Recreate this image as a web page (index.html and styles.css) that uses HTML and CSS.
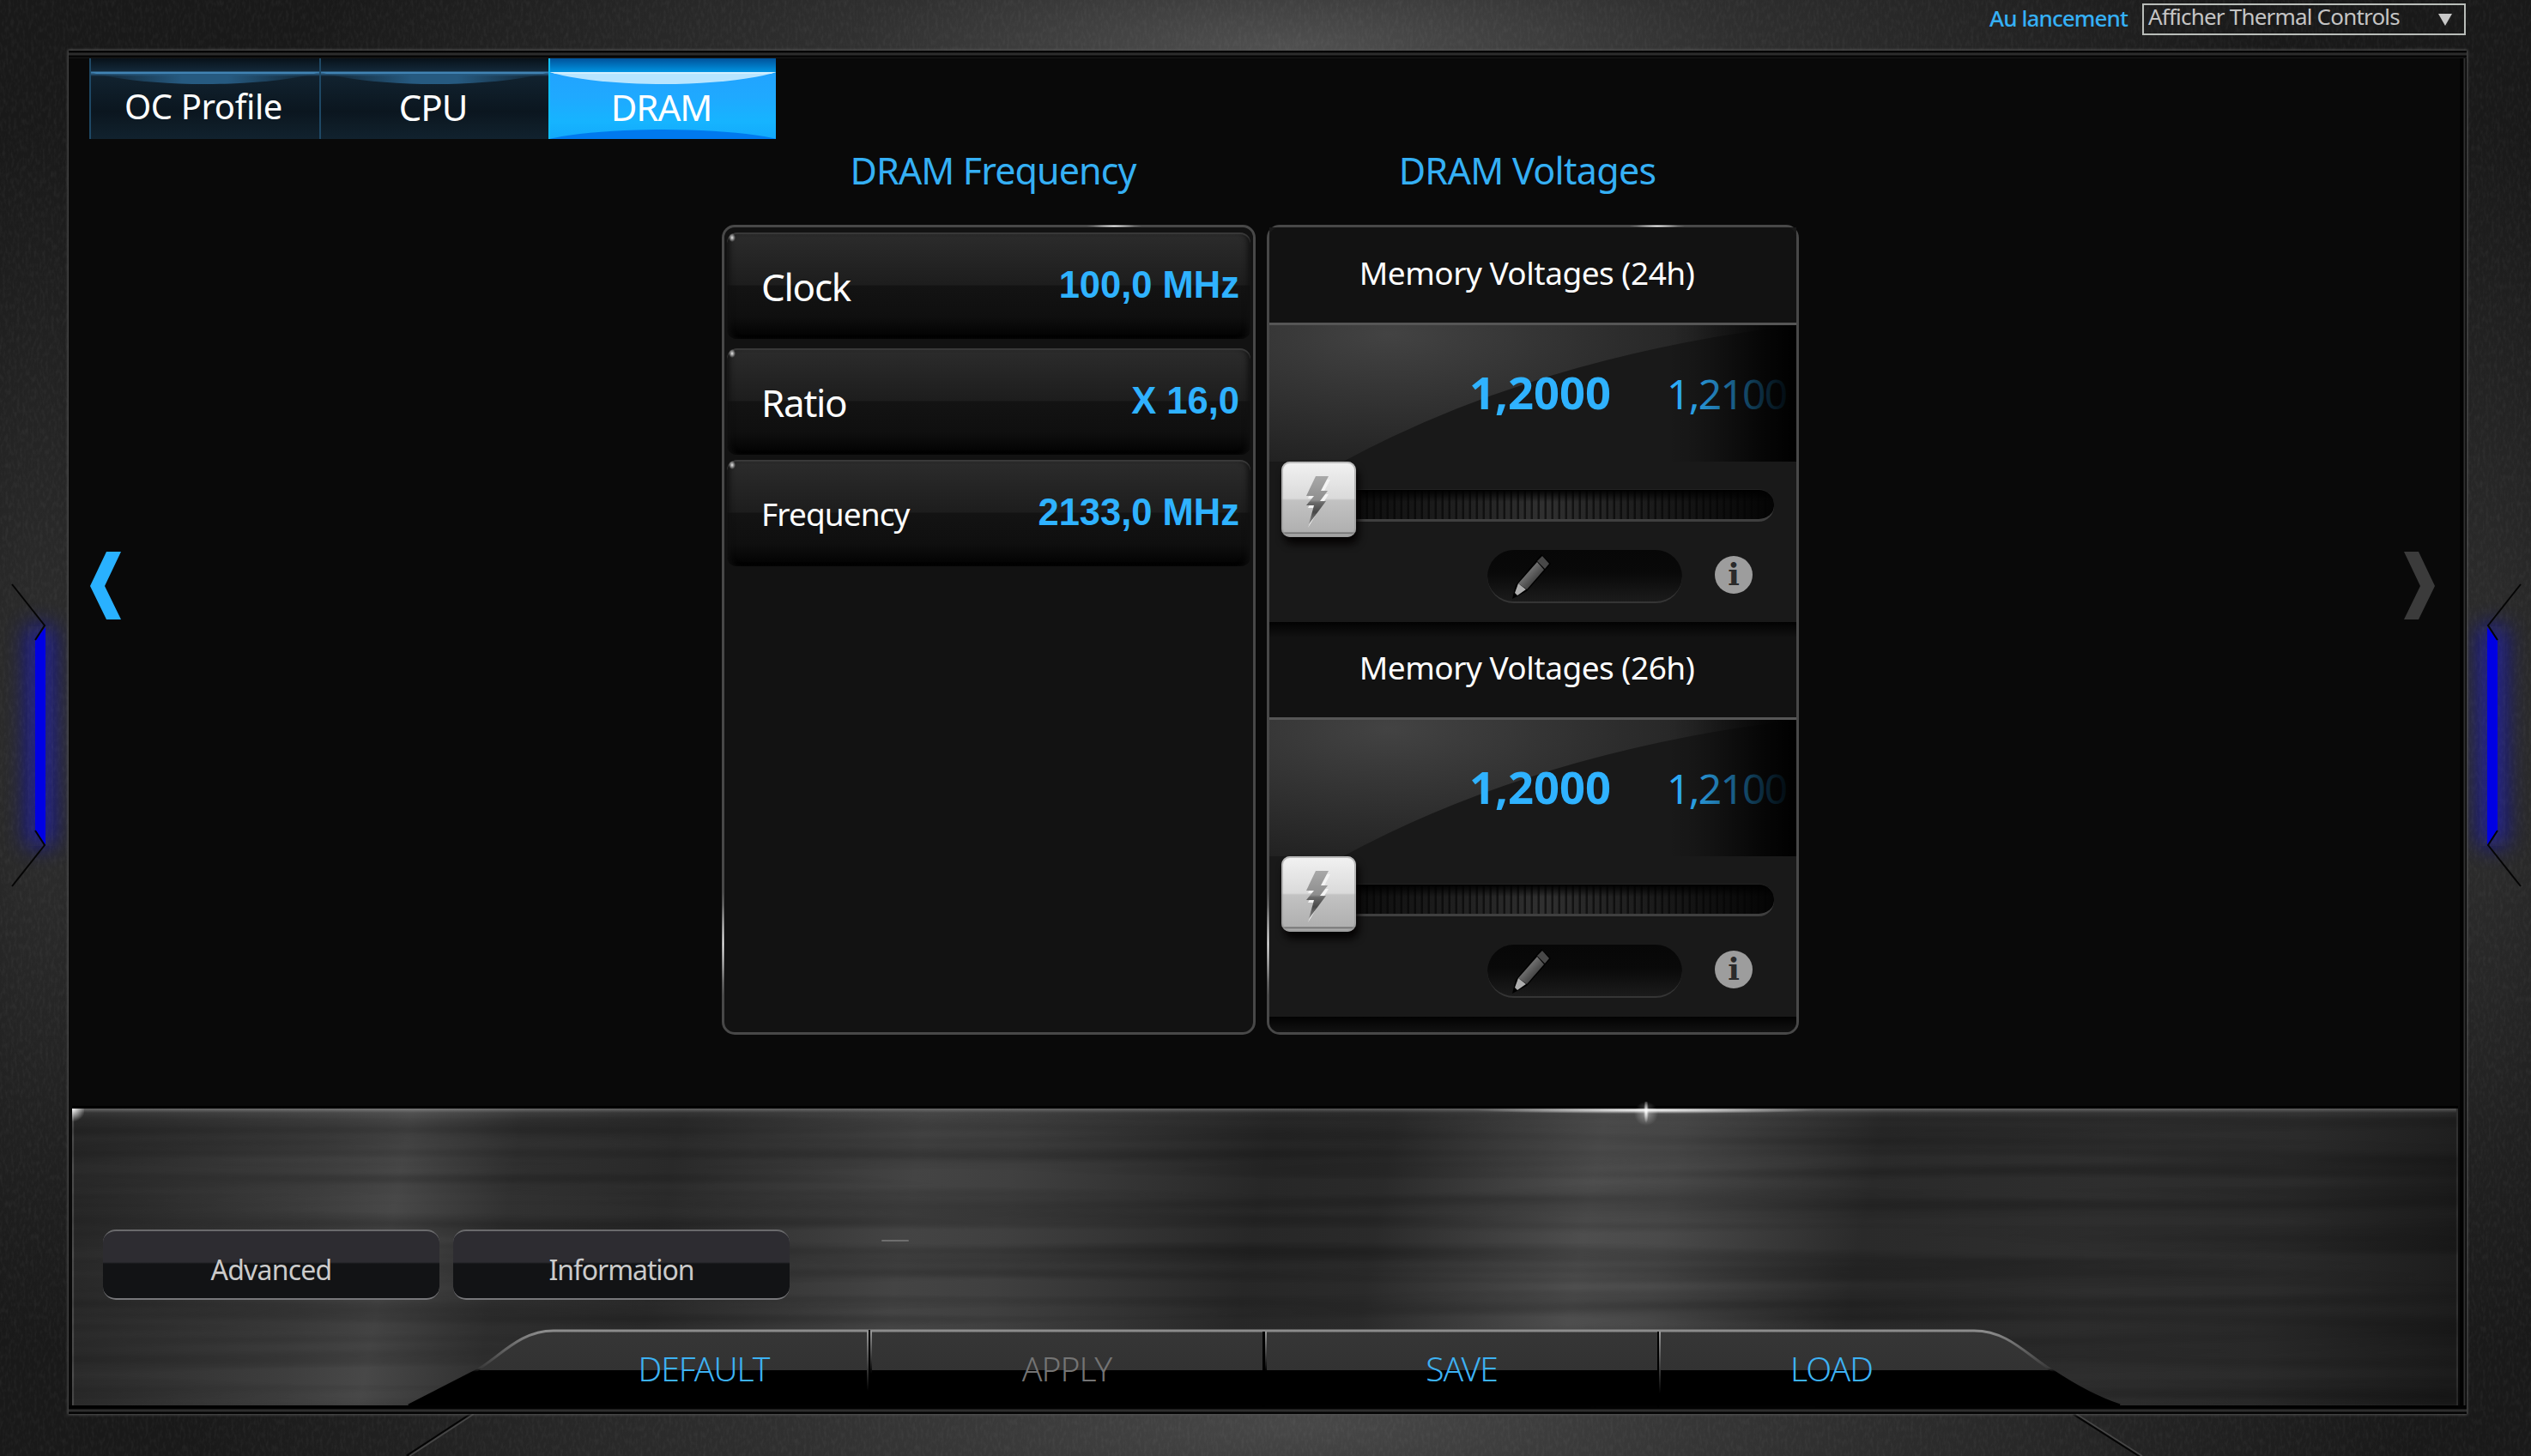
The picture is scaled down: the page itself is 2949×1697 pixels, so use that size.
FILE: index.html
```html
<!DOCTYPE html>
<html lang="fr">
<head>
<meta charset="utf-8">
<title>DRAM</title>
<link rel="stylesheet" href="styles.css">
</head>
<body>

<!-- metal case: grain, side lights, corner cuts -->
<svg class="case" width="2949" height="1697" viewBox="0 0 2949 1697">
	<defs>
		<filter id="grain" x="0" y="0" width="100%" height="100%">
			<feTurbulence type="fractalNoise" baseFrequency="0.3 0.13" numOctaves="2" seed="4"/>
			<feColorMatrix values="0 0 0 0 1  0 0 0 0 1  0 0 0 0 1  1.2 0 0 0 -0.5"/>
		</filter>
		<filter id="glow" x="-400%" y="-20%" width="900%" height="140%">
			<feGaussianBlur stdDeviation="13"/>
		</filter>
	</defs>
	<rect width="2949" height="1697" filter="url(#grain)" opacity="0.08"/>
	<rect x="32" y="730" width="30" height="256" fill="#0a0af0" opacity="0.55" filter="url(#glow)"/>
	<rect x="2889" y="730" width="30" height="256" fill="#0a0af0" opacity="0.55" filter="url(#glow)"/>
	<path d="M41 746L53 731V985L41 969Z" fill="#0000e4"/>
	<path d="M2910 746L2898 731V985L2910 969Z" fill="#0000e4"/>
	<g fill="none" stroke="#050505" stroke-width="2">
		<path d="M14 681L52 729L41 746M41 968L52 985L14 1033"/>
		<path d="M2937 681L2899 729L2910 746M2910 968L2899 985L2937 1033"/>
		<path d="M549 1648L474 1697M2416 1648L2493 1697" stroke-width="3"/>
	</g>
	<path d="M552 1648L477 1697M2419 1648L2496 1697" fill="none" stroke="#454545" stroke-width="2"/>
</svg>

<header class="topbar">
	<label class="launch">Au lancement</label>
	<div class="select"><span>Afficher Thermal Controls</span><i class="caret"></i></div>
</header>

<main class="window">
	<nav class="tabs">
		<div class="tab first">OC Profile</div>
		<div class="tab">CPU</div>
		<div class="tab active">DRAM</div>
	</nav>

	<div class="content">
		<svg class="prev" width="37" height="81" viewBox="0 0 37 81"><path d="M19 1H36L17 41L36 80H19L0 41Z" fill="#29b1ff"/></svg>

		<section class="column freq">
			<h2>DRAM Frequency</h2>
			<div class="panel rows">
				<div class="row"><span>Clock</span><b>100,0 MHz</b></div>
				<div class="row ratio"><span>Ratio</span><b>X 16,0</b></div>
				<div class="row small"><span>Frequency</span><b>2133,0 MHz</b></div>
			</div>
		</section>

		<section class="column volt">
			<h2>DRAM Voltages</h2>
			<div class="panel">
				<div class="voltage">
					<h3>Memory Voltages (24h)</h3>
					<div class="screen">
						<svg class="gloss" width="614" height="159" viewBox="0 0 614 159">
							<defs>
								<radialGradient id="gloss" gradientUnits="userSpaceOnUse" cx="0" cy="0" r="1" gradientTransform="translate(140 10) scale(480 190)">
									<stop offset="0" stop-color="#434343"/><stop offset="1" stop-color="#1b1b1b"/>
								</radialGradient>
							</defs>
							<path d="M0 0H614Q311 37 86 159H0Z" fill="url(#gloss)"/>
						</svg>
						<b>1,2000</b><span>1,2100</span>
					</div>
					<div class="slider">
						<div class="thumb"><svg width="30" height="66" viewBox="0 0 30 66"><path d="M12 6H28L19 23H26L2 62L11 39H2L8 28H2Z" fill="#f4f4f4" transform="translate(1 2)"/><path d="M12 4H27L18 21H26L17 33H24L4 60L10 38H1L10 27H1Z" fill="url(#bolt)"/></svg></div>
						<div class="track"></div>
					</div>
					<div class="tools">
						<div class="edit"><svg width="52" height="56" viewBox="0 0 52 56"><use href="#pencil"/></svg></div>
						<div class="info">i</div>
					</div>
				</div>
				<div class="voltage">
					<h3 class="shade">Memory Voltages (26h)</h3>
					<div class="screen">
						<svg class="gloss" width="614" height="159" viewBox="0 0 614 159"><path d="M0 0H614Q311 37 86 159H0Z" fill="url(#gloss)"/></svg>
						<b>1,2000</b><span>1,2100</span>
					</div>
					<div class="slider">
						<div class="thumb"><svg width="30" height="66" viewBox="0 0 30 66"><path d="M12 6H28L19 23H26L2 62L11 39H2L8 28H2Z" fill="#f4f4f4" transform="translate(1 2)"/><path d="M12 4H27L18 21H26L17 33H24L4 60L10 38H1L10 27H1Z" fill="url(#bolt)"/></svg></div>
						<div class="track"></div>
					</div>
					<div class="tools">
						<div class="edit"><svg width="52" height="56" viewBox="0 0 52 56"><use href="#pencil"/></svg></div>
						<div class="info">i</div>
					</div>
				</div>
				<div class="shade end"></div>
			</div>
		</section>

		<svg class="next" width="37" height="81" viewBox="0 0 37 81"><path d="M18 1H1L20 41L1 80H18L37 41Z" fill="#3b3b3b"/></svg>
	</div>

	<div class="dock">
		<svg class="brushed" width="2780" height="348" viewBox="0 0 2780 348">
			<defs>
				<filter id="brush" x="0" y="0" width="100%" height="100%">
					<feTurbulence type="fractalNoise" baseFrequency="0.0012 0.05" numOctaves="2" seed="9"/>
					<feColorMatrix values="0 0 0 0 0  0 0 0 0 0  0 0 0 0 0  2.2 0 0 0 -0.8"/>
				</filter>
				<linearGradient id="lower" x1="0" y1="0" x2="0" y2="1">
					<stop offset="0" stop-color="#363636"/><stop offset="0.53" stop-color="#323232"/>
					<stop offset="0.53" stop-color="#000"/><stop offset="1" stop-color="#000"/>
				</linearGradient>
				<linearGradient id="edge" x1="0" y1="0" x2="0" y2="1">
					<stop offset="0" stop-color="#8c8c8c"/><stop offset="0.5" stop-color="#3a3a3a"/><stop offset="0.55" stop-color="#000"/>
				</linearGradient>
				<linearGradient id="sep" x1="0" y1="0" x2="0" y2="1">
					<stop offset="0" stop-color="#9a9a9a"/><stop offset="1" stop-color="#000"/>
				</linearGradient>
			</defs>
			<rect width="2780" height="348" filter="url(#brush)" opacity="0.22"/>
			<path d="M392 346L470 306C500 288 522 259 561 259H2216C2256 259 2278 288 2308 306Q2350 334 2386 346Z" fill="url(#lower)"/>
			<path d="M392 346L470 306C500 288 522 259 561 259H2216C2256 259 2278 288 2308 306Q2350 334 2386 346" fill="none" stroke="url(#edge)" stroke-width="3"/>
			<rect x="926" y="259" width="2" height="70" fill="url(#sep)"/>
			<rect x="928" y="258" width="2" height="90" fill="#000"/>
			<rect x="930" y="259" width="2" height="50" fill="url(#sep)"/>
			<rect x="1387" y="260" width="3" height="88" fill="#000"/>
			<rect x="1390" y="260" width="2" height="46" fill="url(#sep)"/>
			<rect x="1847" y="260" width="2" height="88" fill="#000"/>
			<rect x="1849" y="260" width="2" height="72" fill="url(#sep)"/>
			<rect x="943" y="153" width="32" height="2" rx="1" fill="#6e6e6e"/>
		</svg>
		<i class="spark"></i>
		<div class="buttons">
			<div class="button">Advanced</div>
			<div class="button wide">Information</div>
		</div>
		<div class="menu">
			<span>DEFAULT</span>
			<span class="off">APPLY</span>
			<span>SAVE</span>
			<span>LOAD</span>
		</div>
	</div>
</main>

<svg class="shared" width="0" height="0">
	<defs>
		<linearGradient id="bolt" x1="0" y1="0" x2="0" y2="1">
			<stop offset="0" stop-color="#a8a8a8"/><stop offset="0.5" stop-color="#8e8e8e"/>
			<stop offset="0.55" stop-color="#6a6a6a"/><stop offset="0.75" stop-color="#484848"/><stop offset="1" stop-color="#909090"/>
		</linearGradient>
		<linearGradient id="wood" x1="0" y1="0" x2="1" y2="1">
			<stop offset="0.2" stop-color="#8a8a8a"/><stop offset="0.7" stop-color="#3f3f3f"/>
		</linearGradient>
		<g id="pencil">
			<path d="M37 2L48 13L20 45L3 54L7 38Z" fill="#000"/>
			<path d="M38 4L46 13L41 19L32 10Z" fill="#484848"/>
			<path d="M32 11L40 20L20 43L10 36Z" fill="url(#wood)"/>
			<path d="M10 36L19 43L9 50L6 47Z" fill="#adadad"/>
		</g>
	</defs>
</svg>

</body>
</html>
```

FILE: styles.css
```css
body {
	margin: 0;
	width: 2949px;
	height: 1697px;
	overflow: hidden;
	position: relative;
	font-family: "Noto Sans", "Liberation Sans", sans-serif;
	color: #fff;
	background:
		radial-gradient(1150px 260px at 1500px 60px, #515151, rgba(70,70,70,0.5) 45%, transparent),
		radial-gradient(1300px 260px at 1520px 1660px, #484848, rgba(60,60,60,0.6) 50%, transparent),
		radial-gradient(240px 720px at 60px 860px, #303030, transparent),
		radial-gradient(240px 720px at 2890px 860px, #303030, transparent),
		#191919;
}
h2, h3 {
	margin: 0;
	font-weight: normal;
	text-align: center;
}
.case {
	position: absolute;
	left: 0;
	top: 0;
}
.shared {
	position: absolute;
}

.topbar {
	position: relative;
	display: flex;
	height: 59px;
	padding-right: 76px;
	justify-content: flex-end;
}
.launch {
	color: #35b0f5;
	font-size: 26px;
	line-height: 42px;
	margin-right: 17px;
	font-weight: 500;
	letter-spacing: -0.9px;
}
.select {
	box-sizing: border-box;
	width: 377px;
	height: 37px;
	margin-top: 4px;
	padding: 0 14px 0 5px;
	border: 2px solid #b9bdb9;
	color: #c4c4c4;
	font-size: 26px;
	line-height: 27px;
	letter-spacing: -0.8px;
	display: flex;
	justify-content: space-between;
	white-space: nowrap;
}
.caret {
	width: 0;
	height: 0;
	margin-top: 10px;
	border-left: 8px solid transparent;
	border-right: 8px solid transparent;
	border-top: 14px solid #c8c8c8;
}

/* main frame */
.window {
	position: relative;
	box-sizing: border-box;
	width: 2794px;
	height: 1589px;
	margin-left: 80px;
	padding-top: 9px;
	background:
		linear-gradient(#050505 2px, #2c2c2c 3px, #2c2c2c 5px, #040404 6px, #040404 7px, #1c1c1c 9px) top / 100% 9px no-repeat,
		linear-gradient(#020202 4px, #2e2e2e 5px, #2e2e2e 7px, #030303 8px) bottom / 100% 10px no-repeat,
		linear-gradient(90deg, #020202 4px, #303030 5px, #303030 6px, #050505 7px) right / 8px 100% no-repeat,
		#090909;
	box-shadow: 0 0 3px 1px #555;
}

.tabs {
	display: flex;
	height: 94px;
	padding-left: 24px;
}
.tab {
	position: relative;
	box-sizing: border-box;
	width: 267px;
	height: 94px;
	padding-right: 4px;
	text-align: center;
	font-size: 42px;
	line-height: 113px;
	letter-spacing: -1px;
	background: linear-gradient(#081119, #13293a 15px, #3f82b3 16px, #2a5a7f 18px, #11222f 21px, #0b161f 62px, #11222e);
	border-left: 2px solid #1e4865;
}
.tab.first {
	width: 268px;
	font-size: 40px;
	line-height: 111px;
	letter-spacing: -0.4px;
}
.tab.active {
	width: 265px;
	border-left: 2px solid #0fc0ff;
	background: linear-gradient(#00529a, #0090dd 15px, #21a4ff 18px, #1fa9ff 45px, #16b4ff 74px, #12a9fb);
}
.tab::before,
.tab.active::after {
	content: "";
	position: absolute;
	left: 0;
	right: 0;
}
.tab::before {
	top: 16px;
	height: 14px;
	box-sizing: border-box;
	background: linear-gradient(90deg, transparent, #265a80 40%, #265a80 60%, transparent);
	border-top: 2px solid #4184b4;
	clip-path: ellipse(58% 200% at 50% -100%);
}
.tab.active::before {
	background: #b8e5ff;
	border-top-color: #d2f0ff;
}
.tab.active::after {
	bottom: 0;
	height: 11px;
	background: #0079ee;
	clip-path: ellipse(58% 200% at 50% 200%);
}

.content {
	display: flex;
	height: 1130px;
}
.prev {
	margin: 480px 699px 0 25px;
}
.next {
	margin: 480px 0 0 704px;
}
.column h2 {
	height: 100px;
	color: #35b0f5;
	font-size: 43px;
	line-height: 74px;
	letter-spacing: -0.7px;
}
.freq {
	width: 622px;
	margin-right: 13px;
}
.freq h2 {
	padding-left: 10px;
	letter-spacing: -0.9px;
}
.volt {
	width: 620px;
}
.volt h2 {
	padding-right: 13px;
}
.panel {
	position: relative;
	box-sizing: border-box;
	height: 944px;
	border: 3px solid #484848;
	border-radius: 15px;
	background: #121212;
}
.panel::before,
.panel::after {
	content: "";
	position: absolute;
}
.panel::before {
	top: -3px;
	right: 130px;
	width: 64px;
	height: 3px;
	background: radial-gradient(closest-side, #fff, #484848);
}
.panel::after {
	left: -3px;
	top: 775px;
	width: 3px;
	height: 120px;
	background: radial-gradient(closest-side, #fff, #484848);
}

.rows {
	padding: 6px 3px;
}
.row {
	position: relative;
	box-sizing: border-box;
	display: flex;
	justify-content: space-between;
	height: 124px;
	margin-bottom: 11px;
	padding: 0 13px 0 40px;
	border-radius: 12px;
	font-size: 44px;
	line-height: 126px;
	letter-spacing: -1.3px;
	background: linear-gradient(#2c2c2c, #1d1d1d 61px, #131313 62px, #0f0f0f 98px, #010101);
	box-shadow: inset 0 2px 1px #3a3a3a, inset 6px 0 6px -3px #101010, inset -6px 0 6px -3px #101010;
}
.row::before {
	content: "";
	position: absolute;
	left: 2px;
	top: 1px;
	width: 8px;
	height: 10px;
	background: radial-gradient(closest-side, #e8e8e8, transparent);
}
.row b {
	color: #2fb2ff;
	font-family: "Liberation Sans", Arial, sans-serif;
	font-size: 43.5px;
	line-height: 123px;
	letter-spacing: 0;
}
.row.ratio {
	margin-bottom: 6px;
}
.row.small {
	font-size: 37px;
	letter-spacing: -0.9px;
}

.voltage {
	height: 460px;
	background: #191919;
}
.voltage h3 {
	height: 111px;
	padding-right: 14px;
	border-bottom: 3px solid #565656;
	font-size: 37px;
	line-height: 106px;
	letter-spacing: -0.5px;
	background: #121212;
	border-radius: 12px 12px 0 0;
}
.voltage h3.shade {
	border-radius: 0;
}
.shade,
.voltage .shade {
	background: linear-gradient(#020202, #0b0b0b 10px, #121212 18px);
}
.shade.end {
	height: 18px;
	border-radius: 0 0 12px 12px;
}
.screen {
	position: relative;
	display: flex;
	align-items: baseline;
	height: 159px;
	padding-left: 233px;
	color: #2fb2ff;
	line-height: 156px;
	background: #191919;
	overflow: hidden;
}
.screen::after {
	content: "";
	position: absolute;
	right: 0;
	top: 0;
	width: 150px;
	height: 159px;
	background: linear-gradient(90deg, transparent, rgba(0,0,0,0.12) 20%, rgba(0,0,0,0.4) 45%, rgba(0,0,0,0.78) 75%, #000);
}
.gloss {
	position: absolute;
	left: 0;
	top: 0;
}
.screen b, .screen span {
	position: relative;
}
.screen b {
	width: 230px;
	font-size: 52.5px;
}
.screen span {
	font-size: 48px;
	letter-spacing: -1.8px;
}

.slider {
	display: flex;
	height: 103px;
	padding: 0 26px 0 14px;
}
.thumb {
	position: relative;
	z-index: 1;
	box-sizing: border-box;
	width: 87px;
	height: 88px;
	padding: 13px 0 0 28px;
	border-radius: 10px;
	background: linear-gradient(#f2f2f2, #dadada 43px, #c2c2c2 45px, #b0b0b0 82px, #666 83px, #aaa 85px);
	box-shadow: inset 0 0 0 2px rgba(150,150,150,0.6), 3px 8px 10px #050303;
}
.track {
	flex: 1;
	height: 34px;
	margin: 32px 0 0 -50px;
	border-radius: 0 18px 18px 0;
	border-top: 1px solid #222;
	border-bottom: 3px solid #3f3f3f;
	background:
		linear-gradient(#000, transparent 14px),
		linear-gradient(90deg, #040404, transparent 50%, #040404 100%),
		repeating-linear-gradient(90deg, #303030 0, #303030 5px, #141414 6px, #141414 8px);
}
.tools {
	display: flex;
	padding-left: 254px;
}
.edit {
	box-sizing: border-box;
	width: 227px;
	height: 62px;
	margin-right: 38px;
	padding: 3px 0 0 26px;
	border-radius: 31px;
	border-bottom: 2px solid #353535;
	background: linear-gradient(#070707, #090909 45%, #1b1b1b);
}
.info {
	width: 44px;
	height: 44px;
	margin-top: 7px;
	border-radius: 50%;
	background: #9d9d9d;
	color: #2a2a2a;
	text-align: center;
	font: bold 36px/43px "DejaVu Serif", serif;
}

/* brushed metal bottom part */
.dock {
	position: relative;
	width: 2780px;
	height: 346px;
	margin-left: 4px;
	background:
		linear-gradient(rgba(255,255,255,0.3), rgba(255,255,255,0.05) 5px, transparent 12px),
		radial-gradient(200px 4px at 1834px 2px, #fff, transparent),
		linear-gradient(100deg, #282828, #3e3e3e 300px, #484848 390px, #313131 520px, #2b2b2b 700px, #444 980px, #404040 1090px, #272727 1380px, #2a2a2a 1520px, #4e4e4e 1760px, #4a4a4a 1850px, #2a2a2a 2080px, #2e2e2e 2350px, #2b2b2b 2560px, #1c1c1c 2780px);
	box-shadow: inset 2px 0 1px #505050, inset -2px 0 1px #333, 0 -3px 0 #000;
}
.dock::before {
	content: "";
	position: absolute;
	left: 0;
	top: 0;
	width: 14px;
	height: 22px;
	background: radial-gradient(circle at 0 0, #fff, transparent 60%);
}
.brushed {
	position: absolute;
	left: 0;
	top: 0;
}
.spark {
	position: absolute;
	left: 1820px;
	top: -8px;
	width: 28px;
	height: 28px;
	background:
		radial-gradient(3px 14px at 50% 40%, #fff, transparent),
		radial-gradient(closest-side, rgba(255,255,255,0.4), transparent);
}
.buttons {
	position: relative;
	display: flex;
	gap: 16px;
	padding: 141px 0 0 36px;
}
.button {
	box-sizing: border-box;
	width: 392px;
	height: 82px;
	border-radius: 15px;
	border-top: 2px solid #6a6a6c;
	border-bottom: 2px solid #77777a;
	background: linear-gradient(#2d2c31 36px, #121315 38px);
	color: #cacaca;
	text-align: center;
	font-size: 32px;
	line-height: 90px;
	letter-spacing: -0.8px;
}
.button.wide {
	letter-spacing: -1.1px;
}
.menu {
	position: relative;
	display: grid;
	grid-template-columns: 386px 460px 460px 402px;
	margin: 35px 0 0 543px;
	text-align: center;
	font-size: 39px;
	line-height: 90px;
	font-weight: 300;
	color: #3db2f4;
	letter-spacing: -1px;
}
.menu .off {
	color: #747474;
}
```
